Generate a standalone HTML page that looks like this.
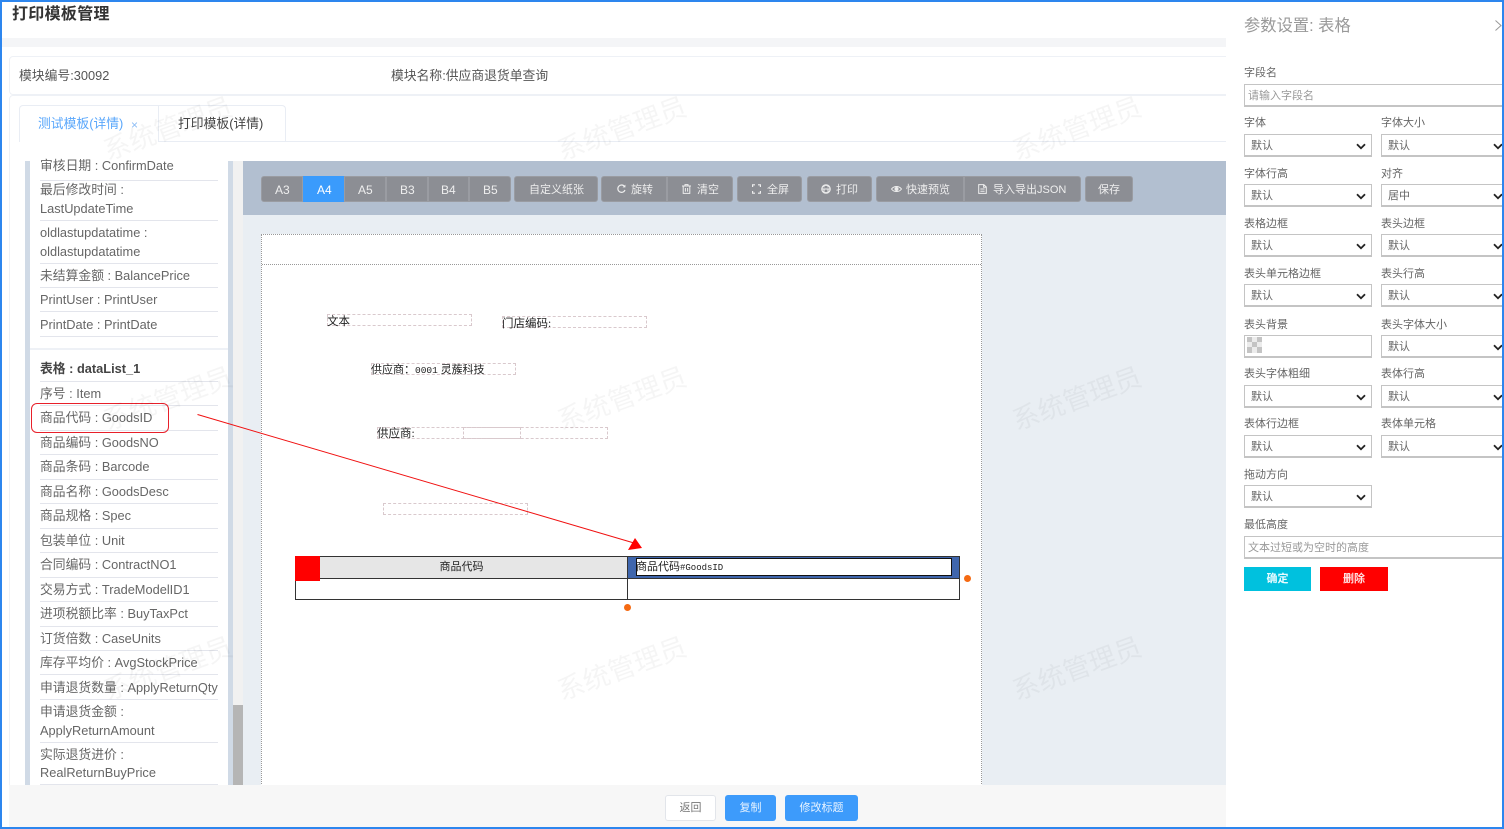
<!DOCTYPE html>
<html lang="zh"><head><meta charset="utf-8"><title>打印模板管理</title>
<style>
html,body{margin:0;padding:0;background:#fff}
#p{position:relative;width:1504px;height:829px;overflow:hidden;background:#fff;font-family:"Liberation Sans","Noto Sans CJK SC",sans-serif;color:#666;font-size:12.8px;filter:blur(.3px)}
#p div,#p span,#p svg{position:absolute;box-sizing:border-box;white-space:nowrap}
.r{left:40px;height:18px;line-height:18px;font-size:12.8px;color:#666;margin-top:1px}
.l{left:40px;width:178px;height:1px;background:#e3e5ec}
.b{top:176px;height:26px;background:#8c8e94;border:1px solid #9a9ca2}
.t{top:181px;height:18px;line-height:18px;font-size:11px;color:#eee}
.ic{top:184px;overflow:visible}
.f{left:1244px;height:16px;line-height:16px;font-size:11px;color:#666;margin-top:1px}
.s{width:128px;height:23px;background:#fff;border:1px solid #c4c4c4;border-bottom-width:2px;border-right-width:1px;font-size:11px;line-height:22px;color:#666;padding-left:6px}
.s svg{right:5px;top:8px}
.d{border:1px dashed #d9c9cd;height:12px}
.m{font-family:"Liberation Serif","Noto Sans CJK SC",serif;font-size:11.5px;line-height:14px;color:#222;height:14px}
.w{font-size:27px;color:rgba(0,0,0,.04);transform:rotate(-20deg);width:150px;height:36px;line-height:36px;text-align:center}
</style></head><body><div id="p">

<div style="left:0;top:38px;width:1226px;height:9px;background:#f4f5f7"></div>
<div style="left:12px;top:3px;height:22px;line-height:22px;font-size:16px;font-weight:bold;color:#333;letter-spacing:.3px;margin-top:1px">打印模板管理</div>

<div style="left:9px;top:56px;width:1230px;height:39px;border:1px solid #eef1f6;border-radius:4px"></div>
<div style="left:19px;top:67px;height:18px;line-height:18px;color:#555">模块编号:30092</div>
<div style="left:391px;top:67px;height:18px;line-height:18px;color:#555">模块名称:供应商退货单查询</div>

<div style="left:9px;top:95px;width:1230px;height:700px;border:1px solid #eef1f6;border-radius:4px"></div>
<div style="left:19px;top:141px;width:1207px;height:1px;background:#e9edf4"></div>
<div style="left:19px;top:105px;width:267px;height:37px;border:1px solid #e9edf4;border-bottom:0;border-radius:4px 4px 0 0"></div>
<div style="left:20px;top:141px;width:138px;height:1px;background:#fff"></div>
<div style="left:158px;top:105px;width:1px;height:36px;background:#e9edf4"></div>
<div style="left:38px;top:115px;height:18px;line-height:18px;color:#5aa7fb">测试模板(详情)</div>
<div style="left:131px;top:116px;height:18px;line-height:18px;font-size:12px;color:#8dbdf5">×</div>
<div style="left:178px;top:115px;height:18px;line-height:18px;color:#444">打印模板(详情)</div>

<!-- left list -->
<div style="left:25px;top:161px;width:5px;height:624px;background:#d0dae6"></div>
<div style="left:228px;top:161px;width:5px;height:624px;background:#d0dae6"></div>
<div style="left:233px;top:161px;width:10px;height:624px;background:#f1f1f1"></div>
<div style="left:233px;top:705px;width:10px;height:80px;background:#b5b5b5"></div>
<div style="left:30px;top:348px;width:198px;height:2px;background:#eef1f6"></div>

<div class="r" style="top:156px">审核日期 : ConfirmDate</div><div class="l" style="top:180px"></div>
<div class="r" style="top:180px">最后修改时间 :</div><div class="r" style="top:199px">LastUpdateTime</div><div class="l" style="top:220px"></div>
<div class="r" style="top:223px">oldlastupdatatime :</div><div class="r" style="top:242px">oldlastupdatatime</div><div class="l" style="top:263px"></div>
<div class="r" style="top:266px">未结算金额 : BalancePrice</div><div class="l" style="top:287px"></div>
<div class="r" style="top:290px">PrintUser : PrintUser</div><div class="l" style="top:311px"></div>
<div class="r" style="top:315px">PrintDate : PrintDate</div><div class="l" style="top:336px"></div>

<div class="r" style="top:359px;font-weight:bold;color:#444">表格 : dataList_1</div><div class="l" style="top:381px"></div>
<div class="r" style="top:384px">序号 : Item</div><div class="l" style="top:405px"></div>
<div class="r" style="top:408px">商品代码 : GoodsID</div><div class="l" style="top:430px"></div>
<div class="r" style="top:433px">商品编码 : GoodsNO</div><div class="l" style="top:454px"></div>
<div class="r" style="top:457px">商品条码 : Barcode</div><div class="l" style="top:479px"></div>
<div class="r" style="top:482px">商品名称 : GoodsDesc</div><div class="l" style="top:503px"></div>
<div class="r" style="top:506px">商品规格 : Spec</div><div class="l" style="top:528px"></div>
<div class="r" style="top:531px">包装单位 : Unit</div><div class="l" style="top:552px"></div>
<div class="r" style="top:555px">合同编码 : ContractNO1</div><div class="l" style="top:577px"></div>
<div class="r" style="top:580px">交易方式 : TradeModelID1</div><div class="l" style="top:601px"></div>
<div class="r" style="top:604px">进项税额比率 : BuyTaxPct</div><div class="l" style="top:626px"></div>
<div class="r" style="top:629px">订货倍数 : CaseUnits</div><div class="l" style="top:650px"></div>
<div class="r" style="top:653px">库存平均价 : AvgStockPrice</div><div class="l" style="top:674px"></div>
<div class="r" style="top:678px">申请退货数量 : ApplyReturnQty</div><div class="l" style="top:699px"></div>
<div class="r" style="top:702px">申请退货金额 :</div><div class="r" style="top:721px">ApplyReturnAmount</div><div class="l" style="top:742px"></div>
<div class="r" style="top:745px">实际退货进价 :</div><div class="r" style="top:763px">RealReturnBuyPrice</div><div class="l" style="top:784px"></div>

<!-- canvas -->
<div style="left:243px;top:215px;width:983px;height:570px;background:#e9eef3"></div>
<div style="left:243px;top:161px;width:983px;height:54px;background:#b2bfd0"></div>

<div class="b" style="left:261px;width:42px;border-radius:3px 0 0 3px"></div>
<div class="b" style="left:303px;width:41px;background:#3a9bfc;border-color:#3a9bfc"></div>
<div class="b" style="left:344px;width:42px"></div>
<div class="b" style="left:386px;width:42px"></div>
<div class="b" style="left:428px;width:41px"></div>
<div class="b" style="left:469px;width:42px;border-radius:0 3px 3px 0"></div>
<div class="b" style="left:514px;width:84px;border-radius:3px"></div>
<div class="b" style="left:601px;width:66px;border-radius:3px 0 0 3px"></div>
<div class="b" style="left:667px;width:66px;border-radius:0 3px 3px 0"></div>
<div class="b" style="left:737px;width:65px;border-radius:3px"></div>
<div class="b" style="left:807px;width:65px;border-radius:3px"></div>
<div class="b" style="left:876px;width:88px;border-radius:3px 0 0 3px"></div>
<div class="b" style="left:964px;width:117px;border-radius:0 3px 3px 0"></div>
<div class="b" style="left:1085px;width:48px;border-radius:3px"></div>

<div class="t" style="left:275px;font-size:12px">A3</div>
<div class="t" style="left:317px;color:#fff;font-size:12px">A4</div>
<div class="t" style="left:358px;font-size:12px">A5</div>
<div class="t" style="left:400px;font-size:12px">B3</div>
<div class="t" style="left:441px;font-size:12px">B4</div>
<div class="t" style="left:483px;font-size:12px">B5</div>
<div class="t" style="left:529px">自定义纸张</div>
<div class="t" style="left:631px">旋转</div>
<div class="t" style="left:697px">清空</div>
<div class="t" style="left:767px">全屏</div>
<div class="t" style="left:836px">打印</div>
<div class="t" style="left:906px">快速预览</div>
<div class="t" style="left:993px">导入导出JSON</div>
<div class="t" style="left:1098px">保存</div>

<svg class="ic" style="left:617px" width="9" height="10" viewBox="0 0 9 10"><path d="M7.600 2.600A3.700 3.700 0 1 0 8 6" fill="none" stroke="#eee" stroke-width="1.200"/><path d="M8.400 .6V3.400H5.600z" fill="#eee"/></svg>
<svg class="ic" style="left:682px" width="9" height="10" viewBox="0 0 9 10"><path d="M0 2H9M3 2V.6H6V2M1.200 2V9.400H7.800V2M3.400 4V7.600M5.600 4V7.600" fill="none" stroke="#eee" stroke-width="1"/></svg>
<svg class="ic" style="left:752px" width="9" height="10" viewBox="0 0 9 10"><path d="M.6 3V.8H3M6 .8H8.400V3M8.400 7V9.200H6M3 9.200H.6V7" fill="none" stroke="#eee" stroke-width="1.200"/></svg>
<svg class="ic" style="left:821px" width="10" height="10" viewBox="0 0 10 10"><circle cx="5" cy="5" r="4.200" fill="none" stroke="#eee" stroke-width="1.200"/><path d="M1 5H9M3 5V8.600H7V5M3 3.400V1.400H7V3.400" fill="none" stroke="#eee" stroke-width="1"/></svg>
<svg class="ic" style="left:891px" width="11" height="10" viewBox="0 0 11 10"><path d="M.5 5C3 1.600 8 1.600 10.500 5C8 8.400 3 8.400 .5 5Z" fill="none" stroke="#eee" stroke-width="1"/><circle cx="5.500" cy="5" r="2" fill="#eee"/></svg>
<svg class="ic" style="left:978px" width="9" height="10" viewBox="0 0 9 10"><path d="M.7 .6H5.800L8.300 3V9.400H.7ZM5.600 .8V3.200H8M2.400 5H6.600M2.400 7.200H6.600" fill="none" stroke="#eee" stroke-width="1"/></svg>

<!-- paper -->
<div style="left:261px;top:234px;width:721px;height:560px;background:#fff;border:1px dotted #999"></div>
<div style="left:262px;top:264px;width:719px;height:0;border-top:1px dotted #999"></div>

<div class="d" style="left:327px;top:314px;width:145px"></div>
<div class="m" style="left:327px;top:315px">文本</div>
<div class="d" style="left:502px;top:316px;width:145px"></div>
<div class="m" style="left:502px;top:317px">门店编码:</div>
<div class="d" style="left:371px;top:363px;width:145px"></div>
<div class="m" style="left:371px;top:363px;font-size:11px">供应商：<span style="position:static;font-family:'Liberation Mono',monospace;font-size:9.5px">0001</span>&nbsp;灵蔟科技</div>
<div class="d" style="left:377px;top:427px;width:231px"></div>
<div class="d" style="left:463px;top:427px;width:58px"></div>
<div class="m" style="left:377px;top:427px">供应商:</div>
<div class="d" style="left:383px;top:503px;width:145px"></div>

<!-- table -->
<div style="left:295px;top:556px;width:665px;height:44px;border:1px solid #333;background:#fff"></div>
<div style="left:296px;top:557px;width:331px;height:21px;background:#e6e6e6"></div>
<div style="left:628px;top:557px;width:331px;height:21px;background:#3f66ad"></div>
<div style="left:295px;top:578px;width:665px;height:1px;background:#333"></div>
<div style="left:627px;top:556px;width:1px;height:44px;background:#333"></div>
<div style="left:295px;top:556px;width:25px;height:25px;background:#f00"></div>
<div style="left:296px;top:558px;width:331px;height:18px;line-height:18px;text-align:center;font-size:11px;color:#222">商品代码</div>
<div style="left:636px;top:558px;width:316px;height:18px;background:#fff;border:1px solid #111"></div>
<div style="left:636px;top:559px;height:16px;line-height:16px;font-size:11px;color:#222">商品代码<span style="position:static;font-family:'Liberation Mono',monospace;font-size:9px">#GoodsID</span></div>
<div style="left:624px;top:604px;width:7px;height:7px;border-radius:50%;background:#f56a12"></div>
<div style="left:964px;top:575px;width:7px;height:7px;border-radius:50%;background:#f56a12"></div>

<!-- bottom bar -->
<div style="left:9px;top:785px;width:1217px;height:44px;background:#f7f7f7"></div>
<div style="left:665px;top:795px;width:51px;height:26px;background:#fff;border:1px solid #e2e5ea;border-radius:3px;text-align:center;line-height:24px;font-size:11px;color:#777">返回</div>
<div style="left:725px;top:795px;width:51px;height:26px;background:#3d9bfb;border-radius:3px;text-align:center;line-height:26px;font-size:11px;color:#e8f3ff">复制</div>
<div style="left:785px;top:795px;width:73px;height:26px;background:#3d9bfb;border-radius:3px;text-align:center;line-height:26px;font-size:11px;color:#e8f3ff">修改标题</div>

<!-- right panel -->
<div style="left:1226px;top:0;width:278px;height:829px;background:#fff"></div>
<div style="left:1244px;top:15px;height:22px;line-height:22px;font-size:16.300px;color:#999">参数设置: 表格</div>
<svg style="left:1494px;top:19px" width="10" height="13" viewBox="0 0 10 13"><path d="M1.500 1.500L7 6.500L1.500 11.500M8 7.500L9.500 9" fill="none" stroke="#999" stroke-width="1"/></svg>

<div class="f" style="top:64px">字段名</div>
<div class="s" style="left:1244px;top:84px;width:270px;color:#999;padding-left:3px">请输入字段名</div>

<div class="f" style="top:114px">字体</div><div class="f" style="top:114px;left:1381px">字体大小</div>
<div class="s" style="left:1244px;top:134px">默认<svg width="10" height="7" viewBox="0 0 10 7"><path d="M1 1.200L5 5.200L9 1.200" fill="none" stroke="#222" stroke-width="1.800"/></svg></div>
<div class="s" style="left:1381px;top:134px">默认<svg width="10" height="7" viewBox="0 0 10 7"><path d="M1 1.200L5 5.200L9 1.200" fill="none" stroke="#222" stroke-width="1.800"/></svg></div>

<div class="f" style="top:165px">字体行高</div><div class="f" style="top:165px;left:1381px">对齐</div>
<div class="s" style="left:1244px;top:184px">默认<svg width="10" height="7" viewBox="0 0 10 7"><path d="M1 1.200L5 5.200L9 1.200" fill="none" stroke="#222" stroke-width="1.800"/></svg></div>
<div class="s" style="left:1381px;top:184px">居中<svg width="10" height="7" viewBox="0 0 10 7"><path d="M1 1.200L5 5.200L9 1.200" fill="none" stroke="#222" stroke-width="1.800"/></svg></div>

<div class="f" style="top:215px">表格边框</div><div class="f" style="top:215px;left:1381px">表头边框</div>
<div class="s" style="left:1244px;top:234px">默认<svg width="10" height="7" viewBox="0 0 10 7"><path d="M1 1.200L5 5.200L9 1.200" fill="none" stroke="#222" stroke-width="1.800"/></svg></div>
<div class="s" style="left:1381px;top:234px">默认<svg width="10" height="7" viewBox="0 0 10 7"><path d="M1 1.200L5 5.200L9 1.200" fill="none" stroke="#222" stroke-width="1.800"/></svg></div>

<div class="f" style="top:265px">表头单元格边框</div><div class="f" style="top:265px;left:1381px">表头行高</div>
<div class="s" style="left:1244px;top:284px">默认<svg width="10" height="7" viewBox="0 0 10 7"><path d="M1 1.200L5 5.200L9 1.200" fill="none" stroke="#222" stroke-width="1.800"/></svg></div>
<div class="s" style="left:1381px;top:284px">默认<svg width="10" height="7" viewBox="0 0 10 7"><path d="M1 1.200L5 5.200L9 1.200" fill="none" stroke="#222" stroke-width="1.800"/></svg></div>

<div class="f" style="top:316px">表头背景</div><div class="f" style="top:316px;left:1381px">表头字体大小</div>
<div class="s" style="left:1244px;top:335px"></div>
<svg style="left:1247px;top:337px" width="15" height="16" viewBox="0 0 15 16"><path d="M0 0H5V5H0ZM10 0H15V5H10ZM5 5H10V10H5ZM0 10H5V16H0ZM10 10H15V16H10Z" fill="#c4c4c4"/><path d="M5 0H10V5H5ZM0 5H5V10H0ZM10 5H15V10H10ZM5 10H10V16H5Z" fill="#ececec"/></svg>
<div class="s" style="left:1381px;top:335px">默认<svg width="10" height="7" viewBox="0 0 10 7"><path d="M1 1.200L5 5.200L9 1.200" fill="none" stroke="#222" stroke-width="1.800"/></svg></div>

<div class="f" style="top:365px">表头字体粗细</div><div class="f" style="top:365px;left:1381px">表体行高</div>
<div class="s" style="left:1244px;top:385px">默认<svg width="10" height="7" viewBox="0 0 10 7"><path d="M1 1.200L5 5.200L9 1.200" fill="none" stroke="#222" stroke-width="1.800"/></svg></div>
<div class="s" style="left:1381px;top:385px">默认<svg width="10" height="7" viewBox="0 0 10 7"><path d="M1 1.200L5 5.200L9 1.200" fill="none" stroke="#222" stroke-width="1.800"/></svg></div>

<div class="f" style="top:415px">表体行边框</div><div class="f" style="top:415px;left:1381px">表体单元格</div>
<div class="s" style="left:1244px;top:435px">默认<svg width="10" height="7" viewBox="0 0 10 7"><path d="M1 1.200L5 5.200L9 1.200" fill="none" stroke="#222" stroke-width="1.800"/></svg></div>
<div class="s" style="left:1381px;top:435px">默认<svg width="10" height="7" viewBox="0 0 10 7"><path d="M1 1.200L5 5.200L9 1.200" fill="none" stroke="#222" stroke-width="1.800"/></svg></div>

<div class="f" style="top:466px">拖动方向</div>
<div class="s" style="left:1244px;top:485px">默认<svg width="10" height="7" viewBox="0 0 10 7"><path d="M1 1.200L5 5.200L9 1.200" fill="none" stroke="#222" stroke-width="1.800"/></svg></div>

<div class="f" style="top:516px">最低高度</div>
<div class="s" style="left:1244px;top:536px;width:270px;color:#999;padding-left:3px">文本过短或为空时的高度</div>

<div style="left:1244px;top:567px;width:67px;height:24px;background:#00c1de;color:#e8fbff;font-size:11px;line-height:24px;text-align:center;font-weight:bold">确定</div>
<div style="left:1320px;top:567px;width:68px;height:24px;background:#f00;color:#ffe0e0;font-size:11px;line-height:24px;text-align:center;font-weight:bold">删除</div>

<!-- annotations -->
<div style="left:31px;top:403px;width:138px;height:30px;border:1px solid #e8202a;border-radius:6px"></div>
<svg style="left:0;top:0" width="1504" height="829" viewBox="0 0 1504 829"><path d="M197.500 414.500L634 543" stroke="#f01010" stroke-width="1" fill="none"/><path d="M642 548L635 538L628 550Z" fill="#f00"/></svg>

<!-- watermarks -->
<div class="w" style="left:93px;top:111px">系统管理员</div>
<div class="w" style="left:547px;top:111px">系统管理员</div>
<div class="w" style="left:1002px;top:111px">系统管理员</div>
<div class="w" style="left:93px;top:381px">系统管理员</div>
<div class="w" style="left:547px;top:381px">系统管理员</div>
<div class="w" style="left:1002px;top:381px">系统管理员</div>
<div class="w" style="left:93px;top:651px">系统管理员</div>
<div class="w" style="left:547px;top:651px">系统管理员</div>
<div class="w" style="left:1002px;top:651px">系统管理员</div>

<!-- outer frame -->
<div style="left:0;top:0;width:1504px;height:829px;border:2px solid #2d86ee"></div>
</div></body></html>
